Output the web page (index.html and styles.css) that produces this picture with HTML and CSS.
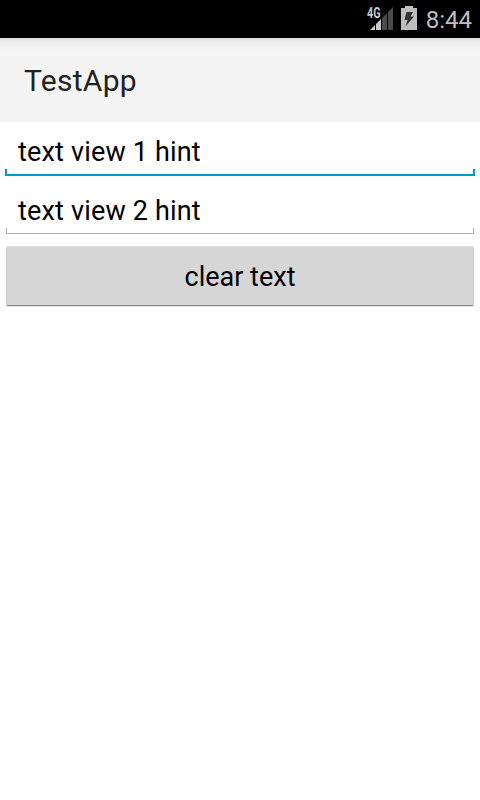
FILE: index.html
```html
<!DOCTYPE html>
<html lang="en">
<head>
<meta charset="utf-8">
<title>TestApp</title>
<link rel="stylesheet" href="styles.css">
</head>
<body>
<div class="status">
  <svg class="signal" width="27" height="26" viewBox="0 0 27 26">
    <path d="M4 25L9 20V25ZM10 19L15 14V25H10Z" fill="#c8c8c8"/>
    <path d="M16 13L21 8V25H16ZM22 7L27 2V25H22Z" fill="#4b4b4b"/>
    <text class="network" x="1" y="13" textLength="13.500" lengthAdjust="spacingAndGlyphs">4G</text>
  </svg>
  <svg class="battery" width="16" height="24" viewBox="0 0 16 24">
    <path d="M4 0H12V2H16V24H0V2H4Z" fill="#bebebe"/>
    <path d="M5.500 6H12L9.500 10.500H13L4.500 20.500L6.500 14H3.500Z" fill="#333"/>
  </svg>
  <span class="clock">8:44</span>
</div>
<header class="bar"><span class="title">TestApp</span></header>
<main class="form">
  <div class="field focused"><span class="value">text view 1 hint</span></div>
  <div class="field"><span class="value">text view 2 hint</span></div>
  <button class="clear"><span class="label">clear text</span></button>
</main>
</body>
</html>
```
FILE: styles.css
```css
* { box-sizing: border-box; }
body { margin: 0; width: 480px; height: 800px; overflow: hidden; background: #fff; font-family: Roboto, sans-serif; color: #000; }
.status { height: 38px; background: #000; display: flex; align-items: flex-start; padding: 6px 8px 0 0; justify-content: flex-end; }
.signal { margin: -1px 8px 0 0; }
.network { font: 700 14px Roboto, sans-serif; fill: #c8c8c8; }
.battery { margin-right: 9px; }
.clock { font-size: 24px; line-height: 28px; color: #bebebe; }
.bar { height: 84px; padding: 1px 0 0 24px; background: linear-gradient(#d6d6d6, #e8e8e8 2px, #efefef 6px, #f4f4f4 12px); display: flex; align-items: center; }
.title { font-size: 30px; line-height: 36px; letter-spacing: 0.3px; color: #222; }
.form { padding: 0 6px; }
.field { height: 53px; margin-bottom: 12px; padding: 12px 12px 0; font-size: 27px; line-height: 36px; letter-spacing: 0.17px;
  background: linear-gradient(#aeaeae, #aeaeae) left bottom / 100% 1px no-repeat, linear-gradient(#aeaeae, #aeaeae) left bottom / 1px 6px no-repeat, linear-gradient(#aeaeae, #aeaeae) right bottom / 1px 6px no-repeat; }
.field.focused { height: 54px; margin: 0 -1px 5px; padding: 12px 13px 0;
  background: linear-gradient(#0099cc, #0099cc) left bottom / 100% 2px no-repeat, linear-gradient(#0099cc, #0099cc) left bottom / 2px 7px no-repeat, linear-gradient(#0099cc, #0099cc) right bottom / 2px 7px no-repeat; }
.value { display: block; }
.clear { display: block; width: 100%; height: 60px; padding: 2px 0 0; border: 1px solid #cecece; border-top-color: #dedede; border-bottom-color: #858585; border-radius: 2px; background: #d6d6d6; box-shadow: 0 1px 0 #e6e6e6; font: 27px/36px Roboto, sans-serif; color: #000; }
```
